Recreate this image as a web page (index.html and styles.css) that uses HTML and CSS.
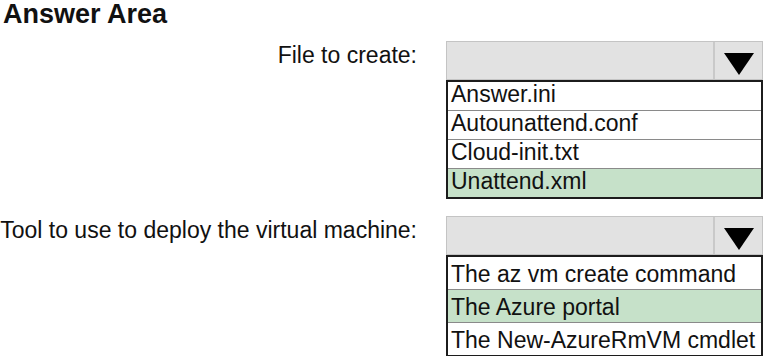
FILE: index.html
```html
<!DOCTYPE html>
<html lang="en">
  <head>
    <meta charset="UTF-8" />
    <title>Answer Area</title>
    <link rel="stylesheet" href="styles.css">
  </head>
  <body>
    <h1 class="title">Answer Area</h1>

    <div class="answer-grid">
      <!-- File to create -->
      <div class="label">File to create:</div>
      <div class="dropdown">
        <div class="select">
          <span class="select-value"></span>
          <span class="select-arrow"></span>
        </div>
        <ul class="options">
          <li>Answer.ini</li>
          <li>Autounattend.conf</li>
          <li>Cloud-init.txt</li>
          <li class="picked">Unattend.xml</li>
        </ul>
      </div>

      <!-- Deploy tool -->
      <div class="label">Tool to use to deploy the virtual machine:</div>
      <div class="dropdown">
        <div class="select">
          <span class="select-value"></span>
          <span class="select-arrow"></span>
        </div>
        <ul class="options tall">
          <li>The az vm create command</li>
          <li class="picked">The Azure portal</li>
          <li>The New-AzureRmVM cmdlet</li>
        </ul>
      </div>
    </div>
  </body>
</html>
```

FILE: styles.css
```css
body {
  margin: 0;
  background: #fff;
  color: #111;
  font-family: "Liberation Sans", Arial, sans-serif;
}

.title {
  margin: 0;
  padding-left: 3px;
  font-size: 27px;
  font-weight: bold;
  line-height: 28px;
}

.answer-grid {
  display: grid;
  grid-template-columns: 417px 317px;
  column-gap: 29px;
  row-gap: 17px;
  margin-top: 13px;
}

.label {
  text-align: right;
  font-size: 23px;
  line-height: 28px;
  white-space: nowrap;
}

.select {
  display: flex;
  height: 37px;
  background: #e2e2e2;
  border: 1px solid #c4c4c4;
}

.select-value {
  flex: 1;
}

.select-arrow {
  width: 49px;
  border-left: 2px solid #c9c9c9;
  display: flex;
  justify-content: center;
  padding-top: 11px;
  box-sizing: border-box;
}

.select-arrow::after {
  content: "";
  width: 0;
  height: 0;
  border-left: 15px solid transparent;
  border-right: 15px solid transparent;
  border-top: 22px solid #000;
}

.options {
  list-style: none;
  margin: 0;
  padding: 0;
  border: 2px solid #1c1c1c;
  font-size: 23px;
}

.options li {
  padding: 0 0 4px 3px;
  line-height: 24px;
  border-top: 1px solid #8a8a8a;
  white-space: nowrap;
}

.options li:first-child {
  border-top: none;
}

.options.tall li {
  padding-top: 5px;
  padding-bottom: 3px;
}

.options li.picked {
  background: #c6e1c9;
}
```
